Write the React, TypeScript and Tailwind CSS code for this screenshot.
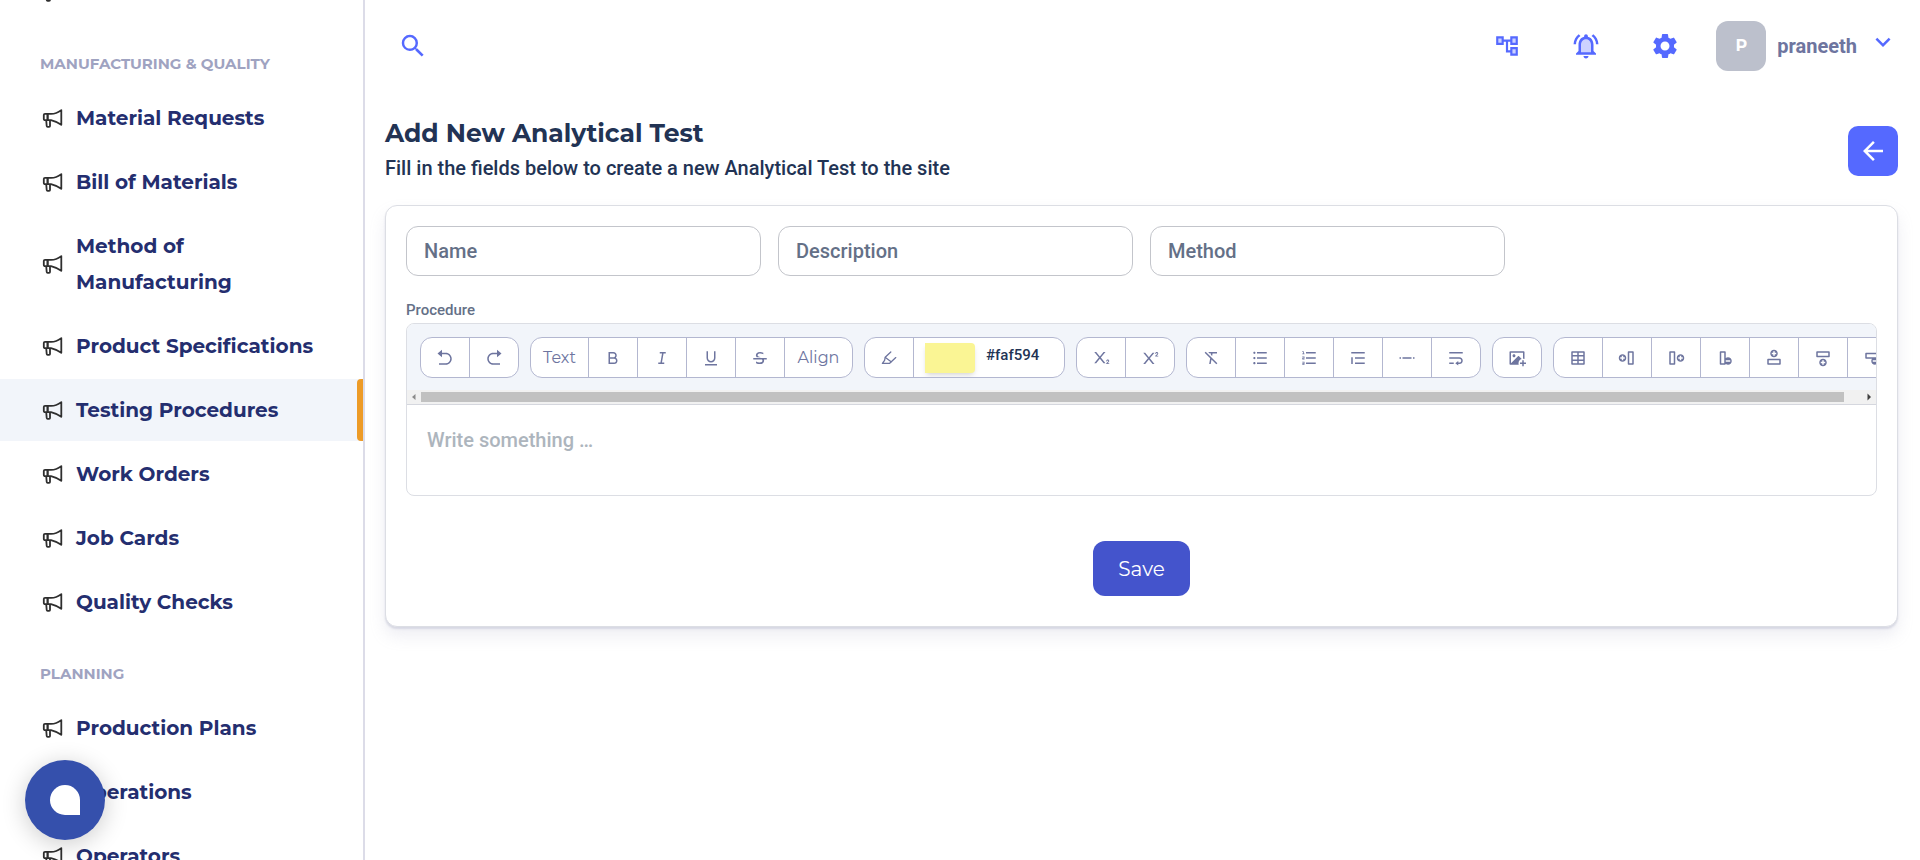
import type { ComponentType, ReactNode } from "react";
import { MdSearch, MdSettings, MdOutlineNotificationsActive, MdOutlineAccountTree, MdKeyboardArrowDown, MdArrowBack } from "react-icons/md";
import {
  RiArrowGoBackFill,
  RiArrowGoForwardFill,
  RiBold,
  RiItalic,
  RiUnderline,
  RiStrikethrough,
  RiSubscript,
  RiSuperscript,
  RiFormatClear,
  RiListUnordered,
  RiListOrdered,
  RiQuoteText,
  RiSeparator,
  RiTextWrap,
  RiImageAddFill,
  RiTable2,
  RiInsertColumnLeft,
  RiInsertColumnRight,
  RiDeleteColumn,
  RiInsertRowTop,
  RiInsertRowBottom,
  RiDeleteRow,
} from "react-icons/ri";

type IconType = ComponentType<{ className?: string }>;

const sections = [
  { title: "", items: ["Customers"] },
  {
    title: "Manufacturing & Quality",
    items: [
      "Material Requests",
      "Bill of Materials",
      "Method of Manufacturing",
      "Product Specifications",
      "Testing Procedures",
      "Work Orders",
      "Job Cards",
      "Quality Checks",
    ],
  },
  { title: "Planning", items: ["Production Plans", "Operations", "Operators"] },
];

const activeItem = "Testing Procedures";

function Megaphone() {
  return (
    <svg viewBox="0 0 22 22" className="size-[22px] shrink-0" fill="none" stroke="#2f2f2f" strokeWidth="1.8" strokeLinejoin="round" aria-hidden="true">
      <path d="M5.6 6.900H3A1.200 1.200 0 0 0 1.800 8.100V12a1.200 1.200 0 0 0 1.200 1.200h2.600z" />
      <path d="M5.600 6.900H9c4 0 7.300-1.500 10.300-3.800v14.700c-3-2.300-6.300-3.600-10.300-4.600H5.600z" />
      <path d="M4.200 13.200l.5 5.800a.9.9 0 0 0 .9.8h1.500a.9.9 0 0 0 .9-.9V13.200" />
    </svg>
  );
}

function Highlighter({ className }: { className?: string }) {
  return (
    <svg viewBox="0 0 18 18" className={className} fill="none" stroke="currentColor" strokeWidth="1.300" strokeLinecap="round" strokeLinejoin="round" aria-hidden="true">
      <path d="M10.800 3L5.200 8.300 4.600 11.200 2.400 14.400H9.600L11.400 12.800z" fill="none" stroke="none" />
      <path d="M10.800 3L5.200 8.300 4.600 11.300 2.400 14.400H9.400L11.300 12.700 15.800 8.600" />
      <path d="M5.400 8.500l5.700 4.200" />
    </svg>
  );
}

function Sidebar() {
  return (
    <aside className="w-[365px] shrink-0 overflow-hidden border-r-2 border-[#dcdce8] bg-white">
      <nav className="-mt-[39px]" aria-label="Main">
        {sections.map((section) => (
          <section key={section.title}>
            {section.title && (
              <h2 className="pt-[29px] pb-[11px] pl-10 text-[15px] leading-6 font-bold text-[#9fa3c1] uppercase">{section.title}</h2>
            )}
            <ul className="flex flex-col gap-0.5">
              {section.items.map((item) => (
                <li key={item}>
                  <a
                    href="#"
                    aria-current={item === activeItem ? "page" : undefined}
                    className={
                      "relative flex items-center gap-3 py-[13px] pr-10 pl-[42px] text-xl leading-9 font-bold text-[#242e6f] " +
                      (item === activeItem ? "bg-[#f2f5fa]" : "")
                    }
                  >
                    <Megaphone />
                    <span>{item}</span>
                    {item === activeItem && <span className="absolute inset-y-0 right-0 w-1.5 rounded-l bg-[#ed9b27]" />}
                  </a>
                </li>
              ))}
            </ul>
          </section>
        ))}
      </nav>
    </aside>
  );
}

function Header() {
  return (
    <header className="flex h-[92px] items-center justify-between pr-[22px] pl-[33px] text-[#5569ff]">
      <button type="button" aria-label="Search">
        <MdSearch className="size-[30px]" />
      </button>
      <div className="flex items-center">
        <div className="flex items-center gap-[49px] pr-9">
          <button type="button" aria-label="Hierarchy" className="flex w-[30px] justify-center">
            <svg viewBox="0 0 24 24" className="size-[26px]" aria-hidden="true">
              <path d="M3 4h5v6H3zM16 4h5v6h-5zM16 14h5v6h-5z" fill="#ccd2ff" />
              <MdOutlineAccountTree size={24} />
            </svg>
          </button>
          <button type="button" aria-label="Notifications">
            <svg viewBox="0 0 24 24" className="size-[30px]" aria-hidden="true">
              <path d="M12 5.500c-3 0-5 2.500-5 5.500v7h10v-7c0-3-2-5.500-5-5.500z" fill="#ccd2ff" />
              <MdOutlineNotificationsActive size={24} />
            </svg>
          </button>
          <button type="button" aria-label="Settings">
            <MdSettings className="size-[30px]" />
          </button>
        </div>
        <button type="button" className="flex items-center">
          <span className="flex size-[50px] items-center justify-center rounded-xl bg-[#bcc0cc] text-base font-bold text-white">P</span>
          <span className="px-[11px] font-['Roboto',sans-serif] text-xl font-bold text-[#6e759f]">praneeth</span>
          <MdKeyboardArrowDown className="mb-2 size-[30px]" />
        </button>
      </div>
    </header>
  );
}

function Tool({ icon: Icon, label }: { icon: IconType; label: string }) {
  return (
    <button type="button" aria-label={label} className="flex w-[49px] items-center justify-center last:w-12">
      <Icon className="size-[18px]" />
    </button>
  );
}

function ToolGroup({ children }: { children: ReactNode }) {
  return (
    <div className="flex h-[41px] shrink-0 divide-x divide-[#b3b7d0] overflow-hidden rounded-xl border border-[#b3b7d0] bg-white text-[#6e759f]">
      {children}
    </div>
  );
}

function Toolbar() {
  return (
    <div className="flex gap-[11px] overflow-hidden bg-[#f2f5fa] pt-[13px] pb-3 pl-[13px]" role="toolbar" aria-label="Formatting">
      <ToolGroup>
        <Tool icon={RiArrowGoBackFill} label="Undo" />
        <Tool icon={RiArrowGoForwardFill} label="Redo" />
      </ToolGroup>
      <ToolGroup>
        <button type="button" className="w-[58px] text-base">Text</button>
        <Tool icon={RiBold} label="Bold" />
        <Tool icon={RiItalic} label="Italic" />
        <Tool icon={RiUnderline} label="Underline" />
        <Tool icon={RiStrikethrough} label="Strikethrough" />
        <button type="button" className="w-[67px] text-base">Align</button>
      </ToolGroup>
      <ToolGroup>
        <Tool icon={Highlighter} label="Highlight" />
        <div className="flex w-[150px] items-center gap-[11px] pl-[11px]">
          <button type="button" aria-label="Highlight colour" className="h-[30px] w-[50px] rounded-r bg-[#faf594] shadow-md" />
          <span className="pb-1 font-['Roboto',sans-serif] text-[15px] font-medium text-[#223354]">#faf594</span>
        </div>
      </ToolGroup>
      <ToolGroup>
        <Tool icon={RiSubscript} label="Subscript" />
        <Tool icon={RiSuperscript} label="Superscript" />
      </ToolGroup>
      <ToolGroup>
        <Tool icon={RiFormatClear} label="Clear formatting" />
        <Tool icon={RiListUnordered} label="Bulleted list" />
        <Tool icon={RiListOrdered} label="Numbered list" />
        <Tool icon={RiQuoteText} label="Quote" />
        <Tool icon={RiSeparator} label="Divider" />
        <Tool icon={RiTextWrap} label="Line break" />
      </ToolGroup>
      <ToolGroup>
        <Tool icon={RiImageAddFill} label="Add image" />
      </ToolGroup>
      <ToolGroup>
        <Tool icon={RiTable2} label="Insert table" />
        <Tool icon={RiInsertColumnLeft} label="Insert column left" />
        <Tool icon={RiInsertColumnRight} label="Insert column right" />
        <Tool icon={RiDeleteColumn} label="Delete column" />
        <Tool icon={RiInsertRowTop} label="Insert row above" />
        <Tool icon={RiInsertRowBottom} label="Insert row below" />
        <Tool icon={RiDeleteRow} label="Delete row" />
      </ToolGroup>
    </div>
  );
}

function ScrollTrack() {
  return (
    <div className="flex h-[15px] items-center border-b border-[#d5d7de] bg-[#f1f1f1]" aria-hidden="true">
      <svg viewBox="0 0 14 14" className="size-3.5 shrink-0">
        <path d="M8.500 4v6L5 7z" fill="#8b8b8b" />
      </svg>
      <div className="h-2.5 flex-1 pr-[18px]">
        <div className="h-full bg-[#c1c1c1]" />
      </div>
      <svg viewBox="0 0 14 14" className="size-3.5 shrink-0">
        <path d="M5.500 3.500v7L9 7z" fill="#404040" />
      </svg>
    </div>
  );
}

export default function App() {
  return (
    <div className="flex h-screen overflow-hidden bg-white font-['Montserrat','Inter',sans-serif] text-[#223354]">
      <Sidebar />
      <div className="min-w-0 flex-1">
        <Header />
        <main className="pr-[22px] pl-5">
          <div className="flex items-center justify-between pt-6 pb-[19px]">
            <div>
              <h1 className="text-[25px] leading-[34px] font-bold">Add New Analytical Test</h1>
              <p className="font-['Roboto',sans-serif] text-xl leading-9 font-medium">
                Fill in the fields below to create a new Analytical Test to the site
              </p>
            </div>
            <button type="button" aria-label="Back" className="flex size-[50px] items-center justify-center rounded-[10px] bg-[#5569ff] text-white">
              <MdArrowBack className="size-[30px]" />
            </button>
          </div>
          <form className="rounded-xl border border-[#dcdee4] bg-white px-5 pt-5 pb-[30px] shadow-[0_9px_16px_rgba(159,162,191,0.18),0_2px_2px_rgba(159,162,191,0.32)]">
            <div className="grid grid-cols-4 gap-[17px]">
              {["Name", "Description", "Method"].map((field) => (
                <input
                  key={field}
                  type="text"
                  aria-label={field}
                  placeholder={field}
                  className="h-[50px] min-w-0 rounded-xl border border-[#c3c5cb] px-[17px] font-['Roboto',sans-serif] text-xl font-medium placeholder:text-[#647087]"
                />
              ))}
            </div>
            <label htmlFor="procedure" className="block pt-[22px] pb-px font-['Roboto',sans-serif] text-[15px] leading-6 font-medium text-[#647087]">
              Procedure
            </label>
            <div className="overflow-hidden rounded-lg border border-[#dcdee4]">
              <Toolbar />
              <ScrollTrack />
              <textarea
                id="procedure"
                placeholder="Write something …"
                className="block h-[90px] w-full resize-none px-5 pt-[19px] font-['Roboto',sans-serif] text-xl leading-8 font-medium placeholder:text-[#adb5bd]"
              />
            </div>
            <div className="flex justify-center pt-[45px]">
              <button type="submit" className="h-[55px] rounded-xl bg-[#4454cc] px-[25px] text-xl text-white">
                Save
              </button>
            </div>
          </form>
        </main>
      </div>
      <button type="button" aria-label="Open chat" className="fixed bottom-5 left-[25px] flex size-20 items-center justify-center rounded-full bg-[#3550ac] shadow-[0_4px_24px_rgba(0,0,0,0.2)]">
        <span className="size-[30px] rounded-full rounded-br-none bg-white" />
      </button>
    </div>
  );
}
